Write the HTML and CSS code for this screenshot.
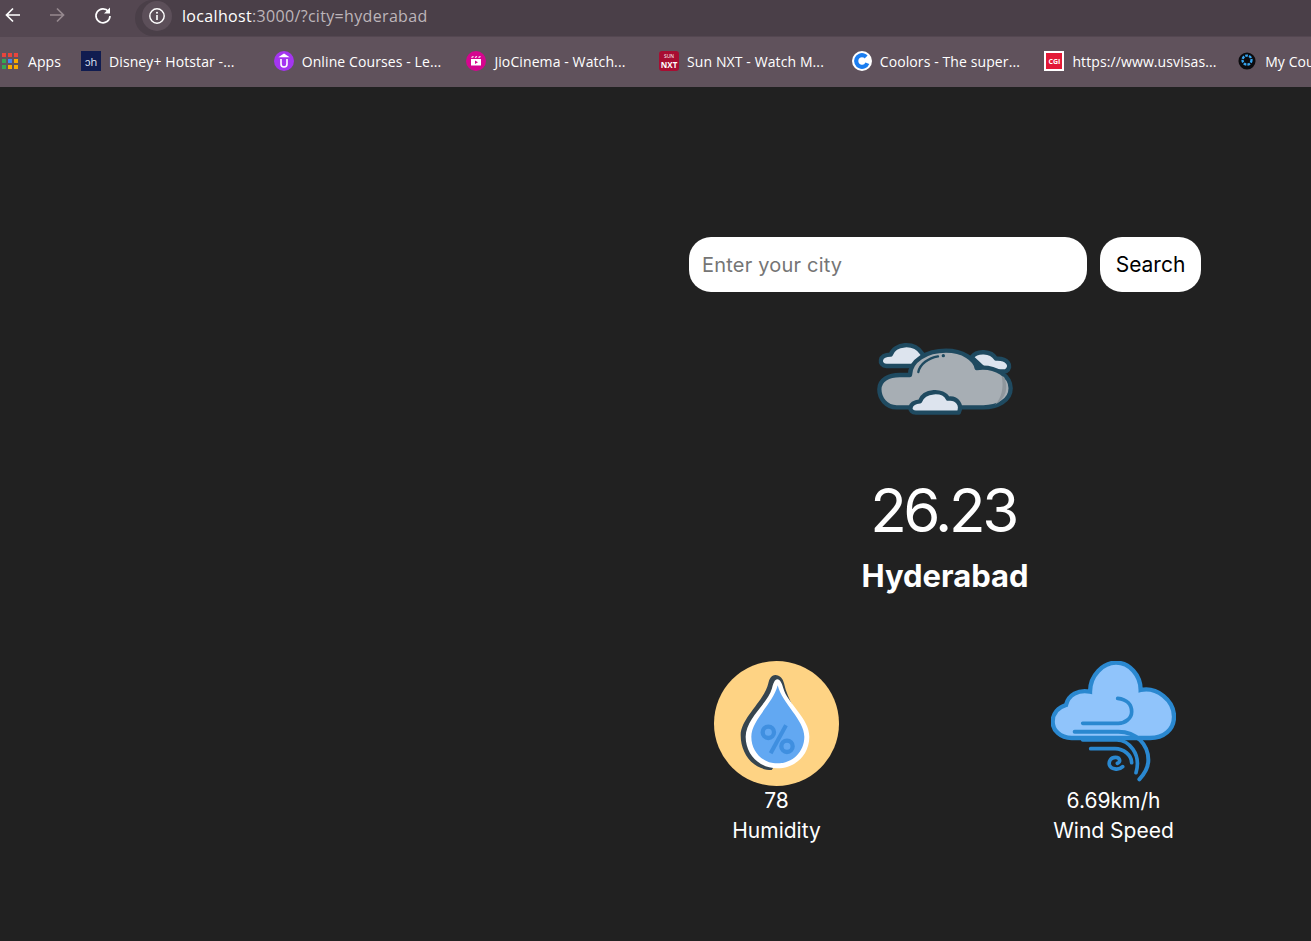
FILE: index.html
```html
<!DOCTYPE html>
<html>
	<head>
		<meta charset="utf-8">
		<title>Weather</title>
		<link rel="stylesheet" href="styles.css">
	</head>
	<body>
		<!-- browser toolbar -->
		<div class="toolbar">
			<svg class="nav-icon" viewBox="0 0 20 20"><path d="M17 10H4M10 3.500L3.500 10l6.500 6.500" fill="none" stroke="#fff" stroke-width="1.700"/></svg>
			<svg class="nav-icon nav-off" viewBox="0 0 20 20"><path d="M3 10h13M10 3.500l6.500 6.500-6.500 6.500" fill="none" stroke="#96898f" stroke-width="1.700"/></svg>
			<svg class="nav-icon" viewBox="0 0 20 20"><path d="M15.500 6.500A7 7 0 1 0 17 11" fill="none" stroke="#fff" stroke-width="1.700"/><path d="M17 2.500v6h-6" fill="#fff"/></svg>
			<div class="omnibox">
				<div class="site-info">
					<svg viewBox="0 0 20 20" width="18" height="18"><circle cx="10" cy="10" r="8" fill="none" stroke="#fff" stroke-width="1.600"/><path d="M10 9v5.500" stroke="#fff" stroke-width="1.800"/><circle cx="10" cy="6.300" r="1.100" fill="#fff"/></svg>
				</div>
				<span class="url"><span class="url-host">localhost</span>:3000/?city=hyderabad</span>
			</div>
		</div>

		<!-- bookmarks -->
		<div class="bookmarks">
			<a class="bookmark bookmark-apps">
				<span class="apps-grid">
					<i class="c-red"></i><i class="c-red"></i><i class="c-red"></i>
					<i class="c-green"></i><i class="c-blue"></i><i class="c-yellow"></i>
					<i class="c-green"></i><i class="c-yellow"></i><i class="c-yellow"></i>
				</span>
				Apps
			</a>
			<a class="bookmark">
				<span class="fav fav-disney">ↄh</span>
				Disney+ Hotstar -...
			</a>
			<a class="bookmark">
				<span class="fav fav-udemy">
					<svg viewBox="0 0 20 20" width="20" height="20"><path d="M7 8v5a3 3 0 0 0 6 0V8M10 3.500l3 2H7z" fill="none" stroke="#fff" stroke-width="1.600"/></svg>
				</span>
				Online Courses - Le...
			</a>
			<a class="bookmark">
				<span class="fav fav-jio">
					<svg viewBox="0 0 20 20" width="20" height="20"><path d="M5 8h10v6.500H5z" fill="#fff"/><path d="M5.500 6.500l2-1M9 6.500l2-1M12.500 6.500l2-1" stroke="#fff" stroke-width="1.300"/><path d="M9 9.500l3 1.700-3 1.700z" fill="#d6058f"/></svg>
				</span>
				JioCinema - Watch...
			</a>
			<a class="bookmark">
				<span class="fav fav-sun">SUN<b>NXT</b></span>
				Sun NXT - Watch M...
			</a>
			<a class="bookmark">
				<span class="fav fav-coolors">
					<svg viewBox="0 0 20 20" width="20" height="20"><circle cx="10" cy="10" r="10" fill="#fff"/><circle cx="10" cy="10" r="5.800" fill="none" stroke="#1a7df0" stroke-width="4.200" stroke-dasharray="29 7.400" transform="rotate(22 10 10)"/></svg>
				</span>
				Coolors - The super...
			</a>
			<a class="bookmark">
				<span class="fav fav-cgi">CGI</span>
				https://www.usvisas...
			</a>
			<a class="bookmark">
				<span class="fav fav-neo">
					<svg viewBox="0 0 20 20" width="18" height="18"><circle cx="10" cy="10" r="9.500" fill="#0b0b0e"/><circle cx="10" cy="9" r="5" fill="none" stroke="#37a4ee" stroke-width="2.600" stroke-dasharray="3 1.200"/></svg>
				</span>
				My Courses
			</a>
		</div>

		<!-- weather app -->
		<div class="weather">
			<div class="top-bar">
				<input class="city-input" type="text" placeholder="Enter your city">
				<button class="search-btn">Search</button>
			</div>

			<svg class="weather-image" viewBox="0 0 510 300">
				<g stroke="#1f4a60" stroke-width="13" stroke-linejoin="round" fill="#dde4ee">
					<path d="M80 108C54 106 56 74 92 74C104 40 162 34 186 70L205 108Z"/>
					<path d="M335 82C350 60 394 62 408 86C442 84 460 108 438 124L380 124Z"/>
					<path d="M150 135C150 92 200 62 258 62C310 62 345 88 350 114C410 106 452 140 452 175C452 214 410 232 370 232L110 232C78 232 58 205 58 178C58 150 85 135 120 135Z" fill="#a7aeb4"/>
					<path d="M168 248C144 248 144 218 180 214C192 180 250 178 264 206C292 202 308 226 296 248Z"/>
				</g>
				<path d="M432 140C446 170 440 205 405 224C425 205 432 170 425 140Z" fill="#8f979d"/>
				<path d="M175 126C180 102 205 84 234 79" fill="none" stroke="#1f4a60" stroke-width="7" stroke-linecap="round"/>
				<circle cx="250" cy="77" r="5" fill="#1f4a60"/>
			</svg>

			<div class="weather-temp">26.23</div>
			<div class="weather-location">Hyderabad</div>

			<div class="data-container">
				<div class="element">
					<svg class="element-icon" viewBox="42 33 375 375">
						<circle cx="229.500" cy="220.500" r="187.500" fill="#fed384"/>
						<path d="M226 75C240 75 249 86 252 100C262 150 300 195 300 240L215 360C160 360 122 312 122 255C122 205 195 150 205 100C208 86 214 75 226 75Z" fill="#36454f"/>
						<path d="M232 88C240 88 246 100 250 115C262 160 328 205 328 260C328 315 285 355 232 355C180 355 137 315 137 260C137 205 204 160 216 115C220 100 224 88 232 88Z" fill="#fff"/>
						<path d="M233 106C246 160 313 210 313 260C313 305 278 340 232 340C188 340 154 305 154 260C154 210 220 160 233 106Z" fill="#62a8f2"/>
						<g fill="none" stroke="#3f8fe0" stroke-width="13">
							<circle cx="205" cy="247" r="17"/>
							<circle cx="261" cy="289" r="17"/>
							<path d="M258 226L212 310" stroke-width="12"/>
						</g>
					</svg>
					<div class="element-value">78</div>
					<div class="element-label">Humidity</div>
				</div>
				<div class="element">
					<svg class="element-icon" viewBox="33 33 375 375">
						<path d="M95 264C60 264 38 240 38 215C38 190 55 172 78 165C85 135 115 118 150 125C150 75 190 38 228 38C268 38 302 75 302 120C350 110 402 150 402 200C402 240 370 264 330 264Z" fill="#90c4fb" stroke="#2a88d0" stroke-width="13"/>
						<g fill="none" stroke="#2a88d0" stroke-width="11" stroke-linecap="round">
							<path d="M233 145C262 148 275 165 275 185C275 205 255 220 235 220L128 220"/>
							<path d="M104 245L235 245C290 245 325 285 325 330C325 352 315 370 298 388" stroke-width="12"/>
							<path d="M128 270L230 270C265 270 305 310 288 368"/>
							<path d="M152 296L225 296C250 296 275 315 275 338"/>
							<path d="M232 340C242 338 242 322 226 322C212 322 206 334 208 344C212 358 236 362 248 350"/>
						</g>
					</svg>
					<div class="element-value">6.69km/h</div>
					<div class="element-label">Wind Speed</div>
				</div>
			</div>
		</div>
	</body>
</html>
```

FILE: styles.css
```css
*{
	margin: 0;
	padding: 0;
	box-sizing: border-box;
}

body{
	height: 941px;
	overflow: hidden;
	background-color: #212121;
	font-family: "Inter", "Liberation Sans", sans-serif;
	color: #fff;
}

/* browser toolbar */
.toolbar{
	height: 37px;
	display: flex;
	align-items: flex-start;
	background-color: #544751;
	padding-left: 3px;
}
.nav-icon{
	width: 20px;
	height: 20px;
	margin-top: 5px;
	margin-right: 24px;
}
.nav-off{
	margin-right: 26px;
}
.omnibox{
	flex: 1;
	height: 36px;
	margin-left: -2px;
	padding: 1px 0 0 7px;
	display: flex;
	align-items: flex-start;
	background-color: #4a3f48;
	border-radius: 18px 0 0 18px;
}
.site-info{
	width: 30px;
	height: 30px;
	margin-right: 10px;
	display: flex;
	align-items: center;
	justify-content: center;
	background-color: #5c4f59;
	border-radius: 50%;
}
.url{
	font-family: "Open Sans", sans-serif;
	font-size: 16px;
	line-height: 30px;
	letter-spacing: 0.33px;
	color: #bdb5ba;
}
.url-host{
	color: #fff;
}

/* bookmarks */
.bookmarks{
	height: 50px;
	display: flex;
	align-items: center;
	padding-left: 2px;
	padding-bottom: 2px;
	background-color: #60525c;
	overflow: hidden;
}
.bookmark{
	flex: none;
	width: 192.700px;
	display: flex;
	align-items: center;
	gap: 8px;
	font-family: "Open Sans", sans-serif;
	font-size: 14px;
	letter-spacing: 0.1px;
	white-space: nowrap;
	color: #fff;
}
.bookmark-apps{
	width: 79px;
	gap: 10px;
}
.apps-grid{
	width: 16px;
	height: 16px;
	display: grid;
	grid-template-columns: repeat(3, 4px);
	grid-auto-rows: 4px;
	gap: 2px;
}
.apps-grid i{
	display: block;
}
.c-red{ background-color: #e8453c; }
.c-green{ background-color: #34a853; }
.c-blue{ background-color: #4285f4; }
.c-yellow{ background-color: #f9ab00; }

.fav{
	flex: none;
	width: 20px;
	height: 20px;
	display: flex;
	align-items: center;
	justify-content: center;
	letter-spacing: 0;
}
.fav-disney{
	background-color: #101c50;
	font-size: 11px;
	color: #dfe6f5;
}
.fav-udemy{
	background-color: #a435f0;
	border-radius: 50%;
}
.fav-jio{
	background-color: #d6058f;
	border-radius: 50%;
}
.fav-sun{
	flex-direction: column;
	background-color: #a80d32;
	border-radius: 3px;
	font-size: 5px;
	line-height: 7px;
}
.fav-sun b{
	display: block;
	font-size: 8px;
	line-height: 9px;
}
.fav-cgi{
	background-color: #e31937;
	border: 2px solid #fff;
	font-size: 7px;
	font-weight: 700;
}

/* weather */
.weather{
	width: 512px;
	margin-left: 689px;
	padding-top: 150px;
	display: flex;
	flex-direction: column;
	align-items: center;
}
.top-bar{
	width: 100%;
	display: flex;
	justify-content: space-between;
}
.city-input{
	width: 398px;
	height: 55px;
	padding-left: 13px;
	border: none;
	border-radius: 22px;
	background-color: #fff;
	font-family: inherit;
	font-size: 20px;
	letter-spacing: 0.2px;
	color: #626262;
}
.city-input::placeholder{
	color: #757575;
}
.search-btn{
	width: 101px;
	height: 55px;
	border: none;
	border-radius: 22px;
	background-color: #fff;
	font-family: inherit;
	font-size: 21px;
	color: #000;
}
.weather-image{
	width: 170px;
	height: 100px;
	margin-top: 38px;
}
.weather-temp{
	margin-top: 41px;
	margin-right: 4px;
	font-size: 60px;
	letter-spacing: -3.400px;
	line-height: 78px;
}
.weather-location{
	margin-top: 7px;
	font-size: 31px;
	line-height: 39px;
	font-weight: 700;
}
.data-container{
	width: 100%;
	margin-top: 66px;
	padding: 0 25px;
	display: flex;
	justify-content: space-between;
}
.element{
	width: 125px;
	display: flex;
	flex-direction: column;
	align-items: center;
}
.element-icon{
	width: 125px;
	height: 125px;
}
.element-value,
.element-label{
	font-size: 21px;
	line-height: 30px;
	white-space: nowrap;
}
```
